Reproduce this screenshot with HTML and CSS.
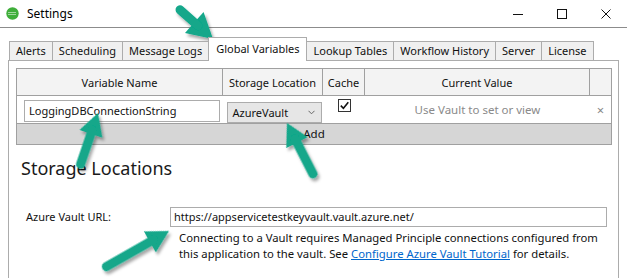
FILE: index.html
```html
<!DOCTYPE html>
<html lang="en">
<head>
    <meta charset="UTF-8">
    <title>Settings</title>
    <link rel="stylesheet" href="styles.css">
</head>
<body>
    <div class="titlebar">
        <svg class="app-icon" width="13" height="13" viewBox="0 0 13 13">
            <circle cx="6.5" cy="6.5" r="6.2" fill="#3fae3a"/>
            <path d="M3 5v3M5 5v3M7 5v3M9 5v3" stroke="#fff" stroke-width="1" stroke-dasharray="1 1"/>
        </svg>
        <span class="title">Settings</span>
        <div class="controls">
            <svg width="12" height="12" viewBox="0 0 12 12"><path d="M1 6.5h10" stroke="#111" stroke-width="1"/></svg>
            <svg width="12" height="12" viewBox="0 0 12 12"><rect x="1.5" y="1.5" width="9" height="9" fill="none" stroke="#111" stroke-width="1"/></svg>
            <svg width="12" height="12" viewBox="0 0 12 12"><path d="M1.5 1.5l9 9M10.5 1.5l-9 9" stroke="#111" stroke-width="1"/></svg>
        </div>
    </div>

    <div class="tabs">
        <div class="tab">Alerts</div>
        <div class="tab">Scheduling</div>
        <div class="tab">Message Logs</div>
        <div class="tab active">Global Variables</div>
        <div class="tab">Lookup Tables</div>
        <div class="tab">Workflow History</div>
        <div class="tab">Server</div>
        <div class="tab">License</div>
    </div>

    <div class="panel">
        <div class="grid">
            <div class="row head">
                <div class="cell c1">Variable Name</div>
                <div class="cell c2">Storage Location</div>
                <div class="cell c3">Cache</div>
                <div class="cell c4">Current Value</div>
                <div class="cell c5"></div>
            </div>
            <div class="row data">
                <div class="cell c1"><div class="textbox">LoggingDBConnectionString</div></div>
                <div class="cell c2">
                    <div class="combo">AzureVault
                        <svg width="7" height="5" viewBox="0 0 7 5"><path d="M0.5 0.8l3 3 3-3" fill="none" stroke="#666" stroke-width="1"/></svg>
                    </div>
                </div>
                <div class="cell c3">
                    <svg class="check" width="13" height="13" viewBox="0 0 13 13">
                        <rect x="0.5" y="0.5" width="12" height="12" fill="#fff" stroke="#333"/>
                        <path d="M2.8 6.6l2.6 2.6 4.9-6" fill="none" stroke="#111" stroke-width="1.6"/>
                    </svg>
                </div>
                <div class="cell c4 muted">Use Vault to set or view</div>
                <div class="cell c5 remove">&times;</div>
            </div>
            <div class="add-row">Add</div>
        </div>

        <h2 class="section">Storage Locations</h2>

        <div class="field">
            <label class="field-label">Azure Vault URL:</label>
            <div class="field-body">
                <div class="url-box">https://appservicetestkeyvault.vault.azure.net/</div>
                <p class="hint">Connecting to a Vault requires Managed Principle connections configured from<br>this application to the vault. See <a href="#">Configure Azure Vault Tutorial</a> for details.</p>
            </div>
        </div>
    </div>

    <!-- annotation arrows drawn over the screenshot -->
    <svg class="arrows" width="627" height="278" viewBox="0 0 627 278">
        <defs>
            <filter id="shadow" x="-30%" y="-30%" width="160%" height="160%">
                <feDropShadow dx="2" dy="3" stdDeviation="1.8" flood-color="#000" flood-opacity="0.35"/>
            </filter>
        </defs>
        <g fill="#12a78a" stroke="#12a78a" filter="url(#shadow)">
            <g transform="translate(213 39) rotate(41.5)">
                <polygon points="0,0 -25,-14 -25,14" stroke="none"/>
                <line x1="-20" y1="0" x2="-44" y2="0" stroke-width="9" stroke-linecap="round"/>
            </g>
            <g transform="translate(98 113) rotate(-71.2)">
                <polygon points="0,0 -22,-12 -22,12" stroke="none"/>
                <line x1="-18" y1="0" x2="-54" y2="0" stroke-width="9" stroke-linecap="round"/>
            </g>
            <g transform="translate(287 123) rotate(-117)">
                <polygon points="0,0 -22,-12 -22,12" stroke="none"/>
                <line x1="-18" y1="0" x2="-57" y2="0" stroke-width="9" stroke-linecap="round"/>
            </g>
            <g transform="translate(169 231) rotate(-29.6)">
                <polygon points="0,0 -22,-12 -22,12" stroke="none"/>
                <line x1="-18" y1="0" x2="-72" y2="0" stroke-width="9" stroke-linecap="round"/>
            </g>
        </g>
    </svg>
</body>
</html>
```

FILE: styles.css
```css
body {
    margin: 0;
    background: #fff;
    font-family: "Noto Sans", "Open Sans", sans-serif;
    font-size: 11px;
    color: #111;
    width: 627px;
    height: 278px;
    overflow: hidden;
    position: relative;
}

/* title bar */
.titlebar {
    height: 27px;
    border-bottom: 1px solid #8c8c8c;
    display: flex;
    align-items: center;
    padding-left: 6px;
}

.app-icon {
    margin-right: 8px;
}

.title {
    font-size: 12px;
    color: #000;
}

.controls {
    margin-left: auto;
    display: flex;
    gap: 32px;
    padding-right: 15px;
}

/* tabs */
.tabs {
    display: flex;
    align-items: flex-end;
    height: 23px;
    margin-top: 9px;
    padding-left: 9px;
    position: relative;
    z-index: 1;
}

.tab {
    height: 19px;
    line-height: 18px;
    padding: 0 6px;
    background: #f0f0f0;
    border: 1px solid #acacac;
    border-bottom: none;
    margin-right: -1px;
    box-sizing: border-box;
    white-space: nowrap;
}

.tab.active {
    height: 24px;
    line-height: 22px;
    background: #fff;
    margin-bottom: -1px;
    padding: 0 7px;
}

/* panel */
.panel {
    margin: 0 8px 0 8px;
    border: 1px solid #acacac;
    border-bottom: none;
    padding: 7px 6px 0 7px;
    height: 240px;
}

.grid {
    border: 1px solid #a0a0a0;
}

.row {
    display: flex;
}

.cell {
    display: flex;
    align-items: center;
    justify-content: center;
    box-sizing: border-box;
}

.c1 { width: 206px; }
.c2 { width: 100px; }
.c3 { width: 42px; }
.c4 { width: 225px; }
.c5 { flex: 1; }

.head {
    height: 26px;
    background: #f3f3f3;
    border-bottom: 1px solid #a0a0a0;
}

.head .cell {
    border-right: 1px solid #a0a0a0;
}

.head .c5 {
    border-right: none;
}

.data {
    height: 27px;
}

.data .c1 {
    justify-content: flex-start;
    padding-left: 7px;
}

.textbox {
    width: 196px;
    height: 22px;
    border: 1px solid #acacac;
    box-sizing: border-box;
    padding-left: 4px;
    line-height: 19px;
    font-size: 11px;
    margin-top: 2px;
}

.combo {
    width: 95px;
    height: 21px;
    margin-top: 5px;
    margin-left: 2px;
    background: #e6e6e6;
    border: 1px solid #acacac;
    box-sizing: border-box;
    display: flex;
    align-items: center;
    justify-content: space-between;
    padding: 0 6px 0 5px;
    font-size: 11px;
}

.check {
    margin-top: -8px;
}

.muted {
    color: #8a8a8a;
    font-size: 11.5px;
}

.remove {
    color: #888;
    font-size: 13px;
}

.add-row {
    height: 20px;
    line-height: 20px;
    background: #d6d6d6;
    border-top: 1px solid #a0a0a0;
    text-align: center;
    font-size: 11.5px;
}

/* storage locations */
.section {
    margin: 11px 0 0 5px;
    font-size: 18px;
    font-weight: 400;
    color: #1a1a1a;
    height: 24px;
    line-height: 24px;
}

.field {
    display: flex;
    margin-top: 27px;
    padding-left: 10px;
}

.field-label {
    width: 144px;
    padding-top: 2px;
}

.field-body {
    flex: 1;
}

.url-box {
    width: 437px;
    height: 20px;
    border: 1px solid #acacac;
    box-sizing: border-box;
    padding-left: 3px;
    line-height: 18px;
    font-size: 11px;
}

.hint {
    margin: 3px 0 0 9px;
    line-height: 16px;
    font-size: 11.3px;
    color: #111;
}

.hint a {
    color: #0066cc;
}

.arrows {
    position: absolute;
    left: 0;
    top: 0;
    pointer-events: none;
}
```
